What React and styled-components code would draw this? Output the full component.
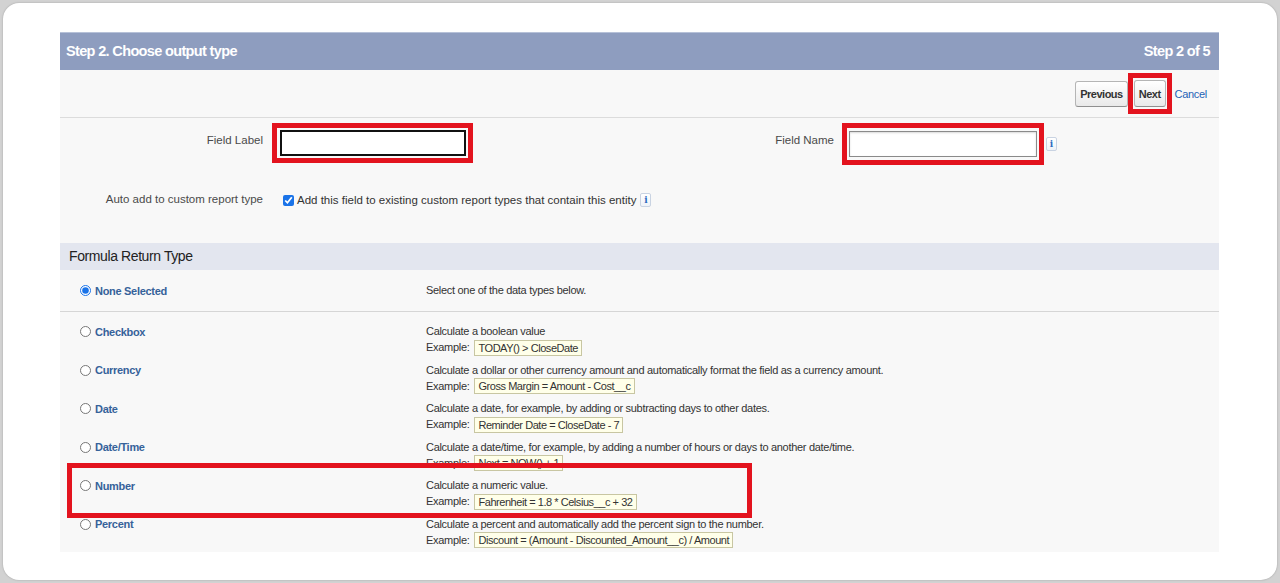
import styled, { createGlobalStyle } from "styled-components";

const GlobalStyle = createGlobalStyle`
  html, body {
    margin: 0;
    padding: 0;
    background: #d2d2d2;
    font-family: "Liberation Sans", Arial, sans-serif;
  }
  *, *::before, *::after { box-sizing: border-box; }
`;

const RED = "#e3131e";

const Card = styled.div`
  margin: 3px;
  height: 577px;
  background: #ffffff;
  border-radius: 16px;
  box-shadow: 0 0 2px rgba(0, 0, 0, 0.25);
  padding: 29px 0 0 57px;
  overflow: hidden;
`;

const Panel = styled.div`
  width: 1159px;
  height: 520px;
  background: #f8f8f8;
  overflow: hidden;
`;

const Header = styled.div`
  height: 38px;
  background: #8e9dbf;
  border-top: 1px solid #b6c1d8;
  display: flex;
  align-items: center;
  justify-content: space-between;
  padding: 0 9px 1px 6px;
  color: #ffffff;
  font-weight: bold;
  font-size: 14.5px;
  letter-spacing: -0.65px;
`;

const ButtonBar = styled.div`
  height: 48px;
  border-bottom: 1px solid #dcdcdc;
  display: flex;
  align-items: center;
  justify-content: flex-end;
  padding-right: 12px;
`;

const Button = styled.button`
  height: ${({ $tall }) => ($tall ? 27 : 26)}px;
  padding: 0 4px;
  font-family: inherit;
  font-size: 11px;
  font-weight: bold;
  letter-spacing: -0.5px;
  color: #333;
  background: linear-gradient(#ffffff, #e9e9e9);
  border: 1px solid #b5b5b5;
  border-bottom-color: #8f8f8f;
  border-radius: 3px;
`;

const RedFrame = styled.div`
  border: 5px solid ${RED};
  padding: ${({ $pad }) => $pad};
  display: inline-flex;
`;

const CancelLink = styled.a`
  margin-left: 3px;
  font-size: 11px;
  letter-spacing: -0.3px;
  color: #1f63b6;
  text-decoration: none;
`;

const FieldGrid = styled.div`
  height: 125px;
  display: grid;
  grid-template-columns: 212px 201px 369px auto;
  grid-template-rows: 42px 16px;
  row-gap: 27px;
  padding-top: 5px;
  font-size: 11.5px;
  color: #4a4a4a;
`;

const FieldLabel = styled.div`
  text-align: right;
  padding-right: ${({ $pr }) => $pr}px;
  margin-top: ${({ $mt }) => $mt || 0}px;
  line-height: 14px;
  white-space: nowrap;
`;

const TextInput = styled.input`
  width: ${({ $w }) => $w}px;
  height: 26px;
  margin: 0;
  background: #fff;
  border: ${({ $focus }) => ($focus ? "2px solid #111" : "1px solid #8a8a8a")};
  box-shadow: ${({ $focus }) => ($focus ? "none" : "inset 0 1px 2px rgba(0,0,0,0.15)")};
  outline: none;
`;

const Inline = styled.div`
  display: flex;
  align-items: center;
  padding-left: ${({ $pl }) => $pl || 0}px;
  grid-column: ${({ $span }) => $span || "auto"};
  color: #333;
  white-space: nowrap;
`;

const InfoIcon = styled.span`
  display: inline-flex;
  align-items: center;
  justify-content: center;
  width: 11px;
  height: 14px;
  margin-left: ${({ $ml }) => $ml}px;
  border: 1px solid #c9d3e2;
  border-radius: 2px;
  background: linear-gradient(#ffffff, #eef2f8);
  color: #2e6bc0;
  font-family: "DejaVu Serif", serif;
  font-weight: bold;
  font-size: 9px;
  line-height: 1;
`;

const CheckBox = styled.input`
  width: 11px;
  height: 11px;
  margin: 0 3px 0 0;
  accent-color: #1a73e8;
`;

const Band = styled.div`
  height: 27px;
  line-height: 27px;
  padding-left: 9px;
  background: #e3e6ef;
  font-size: 14px;
  letter-spacing: -0.4px;
  color: #222;
`;

const TypeRow = styled.div`
  position: relative;
  display: grid;
  grid-template-columns: 366px 1fr;
  align-items: ${({ $single }) => ($single ? "center" : "start")};
  height: ${({ $single }) => ($single ? "42px" : "38.5px")};
  border-bottom: ${({ $single }) => ($single ? "1px solid #d6d6d6" : "none")};
  font-size: 11px;

  ${({ $highlight }) =>
    $highlight &&
    `
    &::after {
      content: "";
      position: absolute;
      left: 7px;
      top: -15px;
      width: 685px;
      height: 55px;
      border: 5px solid ${RED};
      z-index: 2;
    }
  `}
`;

const List = styled.div`
  padding-top: 12px;
`;

const TypeName = styled.label`
  display: flex;
  align-items: center;
  gap: 4px;
  padding-left: 20px;
  height: 15px;
  font-weight: bold;
  letter-spacing: -0.3px;
  color: #36629a;
`;

const Radio = styled.input`
  width: 11px;
  height: 11px;
  margin: 0;
  accent-color: #1a73e8;
`;

const Desc = styled.div`
  color: #333;
  line-height: 15px;
  letter-spacing: -0.3px;
  white-space: nowrap;
`;

const ExampleLine = styled.div`
  display: flex;
  align-items: center;
  height: 17px;
  gap: 5px;
`;

const Code = styled.span`
  height: 16px;
  line-height: 14px;
  padding: 0 3px;
  background: #ffffe9;
  border: 1px solid #c8c6a2;
  color: #333;
  letter-spacing: -0.45px;
  white-space: nowrap;
`;

const types = [
  { name: "Checkbox", desc: "Calculate a boolean value", ex: "TODAY() > CloseDate" },
  {
    name: "Currency",
    desc: "Calculate a dollar or other currency amount and automatically format the field as a currency amount.",
    ex: "Gross Margin = Amount - Cost__c",
  },
  {
    name: "Date",
    desc: "Calculate a date, for example, by adding or subtracting days to other dates.",
    ex: "Reminder Date = CloseDate - 7",
  },
  {
    name: "Date/Time",
    desc: "Calculate a date/time, for example, by adding a number of hours or days to another date/time.",
    ex: "Next = NOW() + 1",
  },
  {
    name: "Number",
    desc: "Calculate a numeric value.",
    ex: "Fahrenheit = 1.8 * Celsius__c + 32",
    highlight: true,
  },
  {
    name: "Percent",
    desc: "Calculate a percent and automatically add the percent sign to the number.",
    ex: "Discount = (Amount - Discounted_Amount__c) / Amount",
  },
];

export default function App() {
  return (
    <>
      <GlobalStyle />
      <Card>
        <Panel>
          <Header>
            <span>Step 2. Choose output type</span>
            <span>Step 2 of 5</span>
          </Header>

          <ButtonBar>
            <Button>Previous</Button>
            <RedFrame $pad="2px 1px">
              <Button $tall>Next</Button>
            </RedFrame>
            <CancelLink href="#">Cancel</CancelLink>
          </ButtonBar>

          <FieldGrid>
            <FieldLabel $pr={9} $mt={10}>Field Label</FieldLabel>
            <div>
              <RedFrame $pad="2px 2px 2px 3px">
                <TextInput $w={186} $focus />
              </RedFrame>
            </div>
            <FieldLabel $pr={8} $mt={10}>Field Name</FieldLabel>
            <Inline>
              <RedFrame $pad="3px 2px 3px 2px">
                <TextInput $w={188} />
              </RedFrame>
              <InfoIcon $ml={2}>i</InfoIcon>
            </Inline>

            <FieldLabel $pr={9}>Auto add to custom report type</FieldLabel>
            <Inline $span="2 / -1" $pl={11}>
              <CheckBox type="checkbox" defaultChecked />
              Add this field to existing custom report types that contain this entity
              <InfoIcon $ml={4}>i</InfoIcon>
            </Inline>
          </FieldGrid>

          <Band>Formula Return Type</Band>

          <TypeRow $single>
            <TypeName>
              <Radio type="radio" name="rt" defaultChecked />
              None Selected
            </TypeName>
            <Desc>Select one of the data types below.</Desc>
          </TypeRow>

          <List>
            {types.map((t) => (
              <TypeRow key={t.name} $highlight={t.highlight}>
                <TypeName>
                  <Radio type="radio" name="rt" />
                  {t.name}
                </TypeName>
                <Desc>
                  {t.desc}
                  <ExampleLine>
                    Example:
                    <Code>{t.ex}</Code>
                  </ExampleLine>
                </Desc>
              </TypeRow>
            ))}
          </List>
        </Panel>
      </Card>
    </>
  );
}
